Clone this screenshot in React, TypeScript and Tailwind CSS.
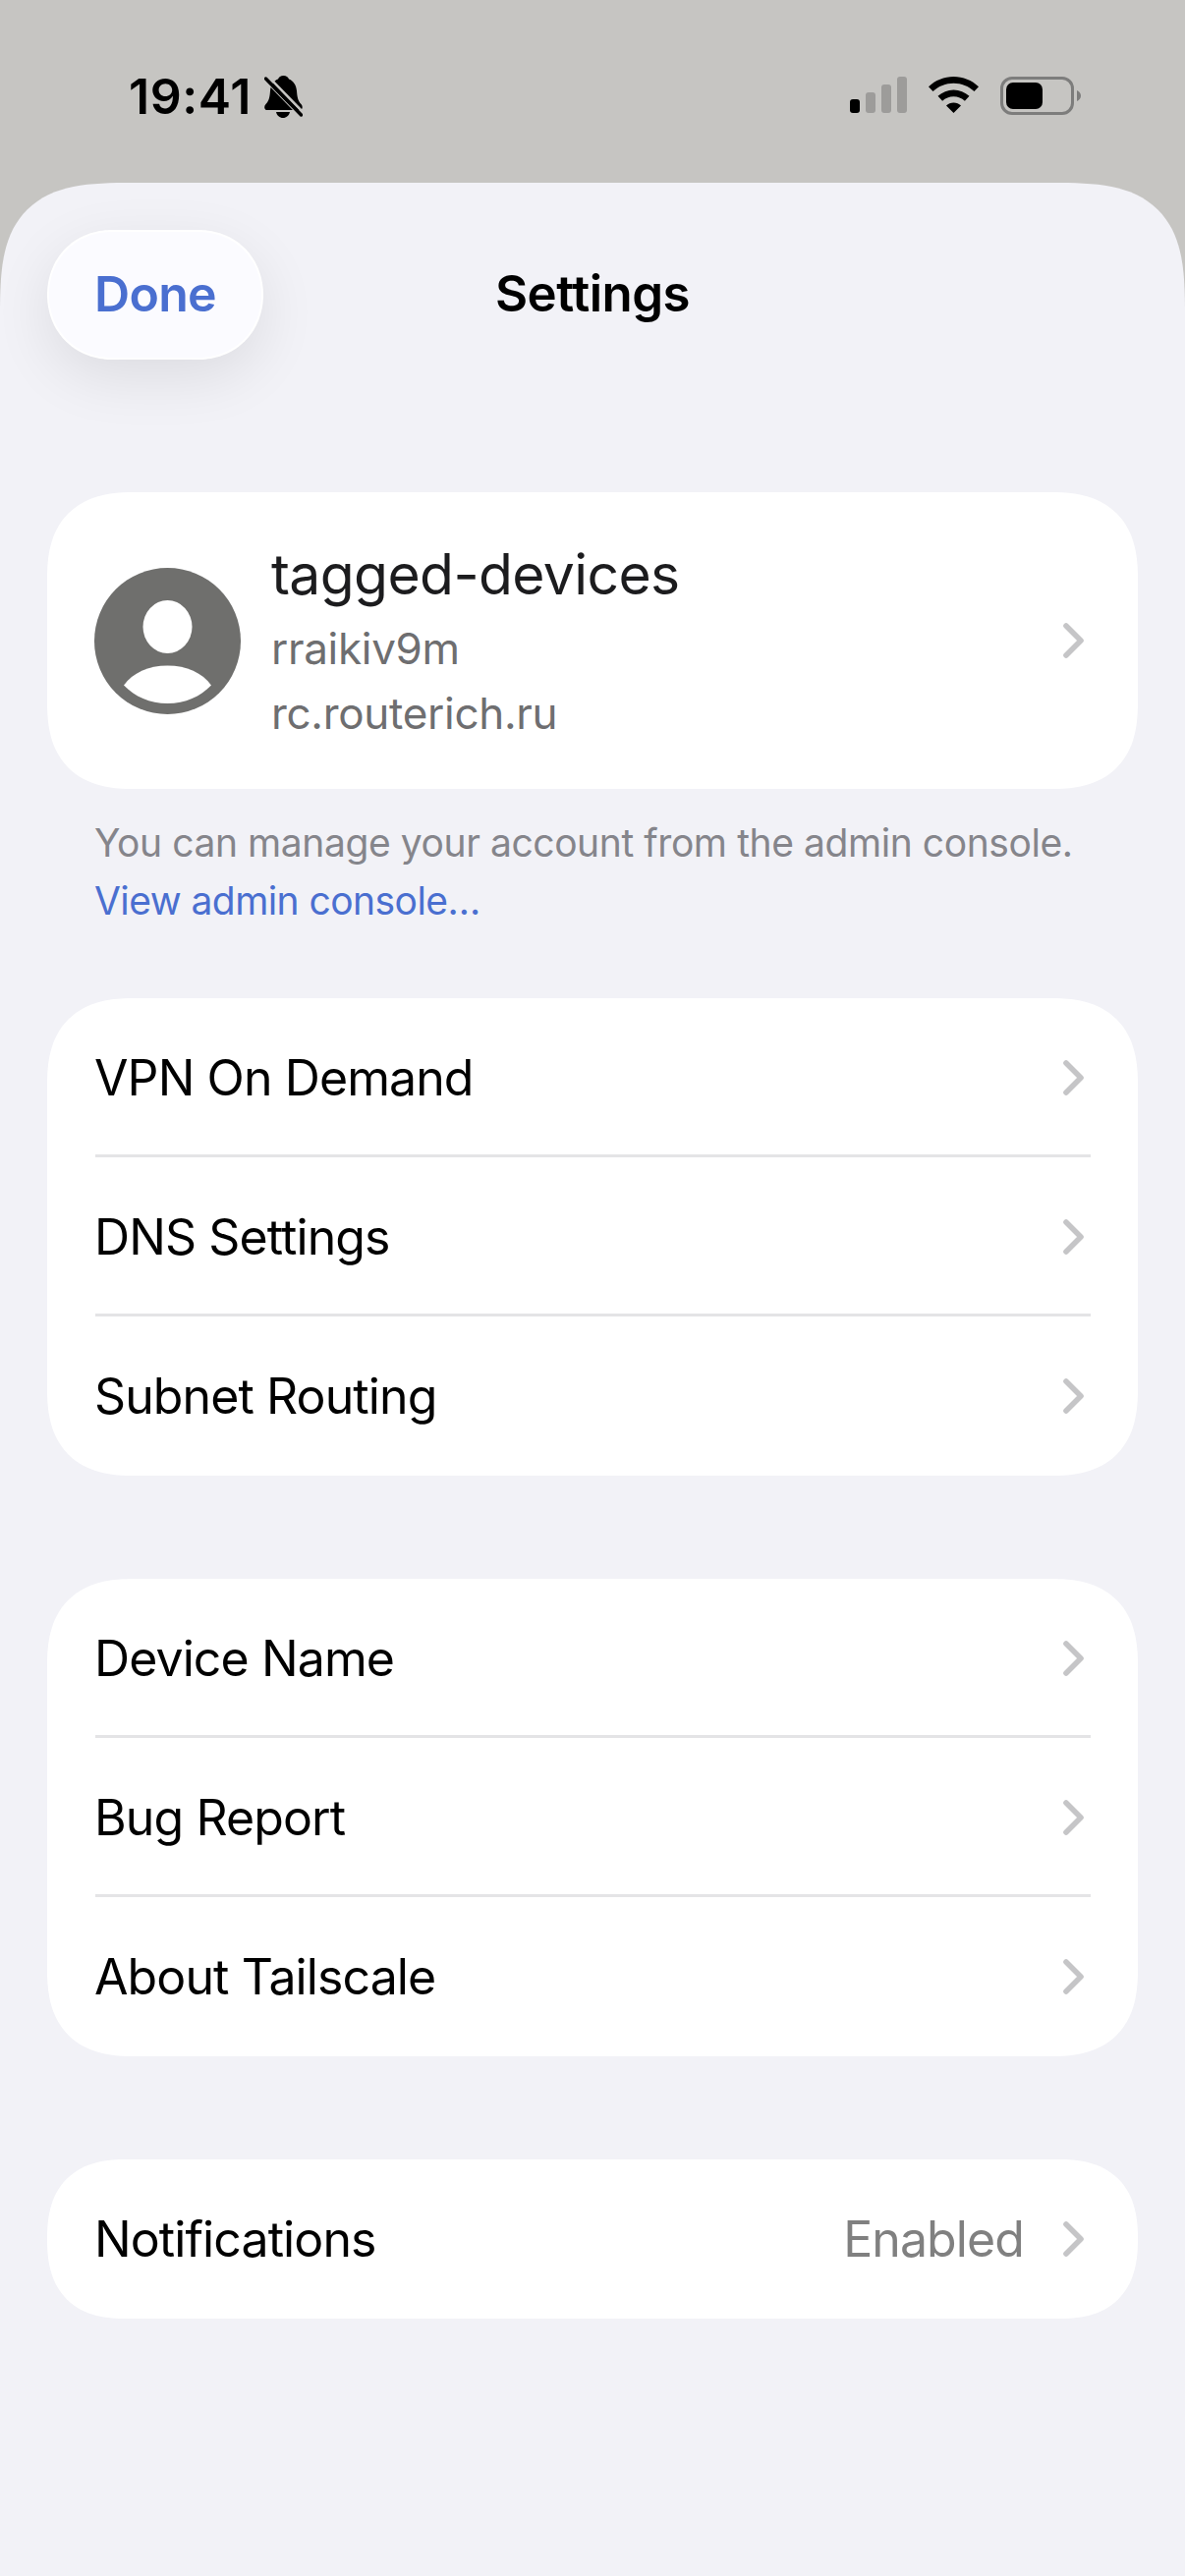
import { ReactNode } from 'react';

function Chevron() {
  return (
    <svg className="w-[21px] h-[36px] shrink-0" viewBox="0 0 21 36" fill="none">
      <path d="M3 3l15 15L3 33" stroke="#c5c5c7" strokeWidth={5.600} strokeLinecap="round" strokeLinejoin="round" />
    </svg>
  );
}

function MutedBell() {
  return (
    <svg className="w-[39px] h-[43px]" viewBox="0 0 39 43">
      <path d="M19.500 0c3 0 4.500 1.500 5.500 3.500 5 2 7.500 6.500 8 12 .5 6 1 10 4.500 13.500 2 2 1.500 6-1.500 6H3c-3 0-3.800-3.500-1.500-6 3.500-3.500 4-7.500 4.500-13.500C6.500 10 9 5.500 14 3.500 15 1.500 16.500 0 19.500 0z" fill="#000" />
      <path d="M12 37h14c-.8 3.500-3.500 6-7 6s-6.200-2.500-7-6z" fill="#000" />
      <path d="M2.800 -.3l38 39" stroke="#c6c5c2" strokeWidth={2.600} fill="none" />
      <path d="M-.5 3.700l36 37" stroke="#c6c5c2" strokeWidth={1.400} fill="none" />
      <path d="M1.500 3l36 37" stroke="#000" strokeWidth={3.400} strokeLinecap="round" fill="none" />
    </svg>
  );
}

function SignalBars() {
  return (
    <div className="flex items-end gap-[6px] h-[37px]">
      <div className="w-[10px] h-[14px] rounded-[3px] bg-black" />
      <div className="w-[10px] h-[21px] rounded-[3px] bg-[#9d9c9a]" />
      <div className="w-[10px] h-[29px] rounded-[3px] bg-[#9d9c9a]" />
      <div className="w-[10px] h-[37px] rounded-[3px] bg-[#9d9c9a]" />
    </div>
  );
}

function Wifi() {
  return (
    <svg className="w-[51px] h-[37px]" viewBox="0 0 51 37">
      <path d="M25.500 0C35 0 44 3.700 51 10.200l-4.500 4.800C40.800 9.700 33.500 6.700 25.500 6.700S10.200 9.700 4.500 15L0 10.200C7 3.700 16 0 25.500 0z" fill="#000" />
      <path d="M25.500 13.500c6 0 11.500 2.300 16 6.300l-4.600 4.900c-3.100-2.800-7.100-4.400-11.400-4.400s-8.300 1.600-11.400 4.400l-4.600-4.900c4.500-4 10-6.300 16-6.300z" fill="#000" />
      <path d="M25.500 26.500c2.900 0 5.500 1 7.500 2.900L25.500 37 18 29.400c2-1.900 4.600-2.900 7.500-2.900z" fill="#000" />
    </svg>
  );
}

function Battery() {
  return (
    <div className="flex items-center gap-[3px]">
      <div className="w-[75px] h-[39px] rounded-[12px] border-[3px] border-[#7d7d7c] p-[3px]">
        <div className="w-[37px] h-full rounded-[7px] bg-black" />
      </div>
      <svg className="w-[4px] h-[11px]" viewBox="0 0 4 11">
        <path d="M0 0c2.500 1 4 3 4 5.500S2.500 10 0 11z" fill="#7d7d7c" />
      </svg>
    </div>
  );
}

function Avatar() {
  return (
    <svg className="w-[149px] h-[149px] shrink-0" viewBox="0 0 149 149">
      <circle cx="74.500" cy="74.500" r="74.500" fill="#6f6f6d" />
      <ellipse cx="74.500" cy="60" rx="25" ry="27" fill="#fff" />
      <path d="M30 119.500C39 107 55 99.500 74.500 99.500S110 107 119 119.500C108 131 92.500 138 74.500 138S41 131 30 119.500z" fill="#fff" />
    </svg>
  );
}

function Card({ children }: { children: ReactNode }) {
  return <div className="bg-white rounded-[88px] [corner-shape:superellipse(1.3)] mx-[48px] overflow-hidden">{children}</div>;
}

function Row({ label, value, last }: { label: string; value?: string; last?: boolean }) {
  return (
    <div className="relative h-[162px] pl-[48px] pr-[55px] flex items-center">
      <span className="flex-1 text-[50px] tracking-[-0.9px] text-black">{label}</span>
      {value && <span className="text-[50px] tracking-[-0.9px] text-[#808080] mr-[40px]">{value}</span>}
      <Chevron />
      {!last && <div className="absolute left-[49px] right-[48px] bottom-0 h-[3px] bg-[#e4e4e6]" />}
    </div>
  );
}

export default function App() {
  return (
    <div className="w-[1206px] h-[2622px] bg-[#c6c5c2] flex flex-col font-['Inter',sans-serif]">
      <div className="h-[186px] shrink-0 flex justify-between pl-[131px] pr-[106px] pt-[77px]">
        <div className="flex items-start gap-[13px]">
          <span className="text-[50px] leading-[42px] font-semibold tracking-[0.6px] text-black">19:41</span>
          <MutedBell />
        </div>
        <div className="flex items-start gap-[22px] pt-[1px]">
          <SignalBars />
          <Wifi />
          <Battery />
        </div>
      </div>

      <div className="flex-1 bg-[#f2f2f7] rounded-t-[135px] [corner-shape:superellipse(1.6)] overflow-hidden">
        <div className="grid grid-cols-[1fr_auto_1fr] items-center pl-[48px] pt-[48px] pr-[48px]">
          <div className="w-[220px] h-[132px] rounded-[66px] [corner-shape:superellipse(1.05)] bg-[#fbfbff] border-[2px] border-white shadow-[0_18px_60px_rgba(0,0,0,0.09)] flex items-center justify-center">
            <span className="text-[50px] font-semibold tracking-[-0.7px] text-[#4a6fd0] -mt-[2px]">Done</span>
          </div>
          <span className="text-[51px] font-semibold tracking-[-0.5px] text-black -mt-[2px]">Settings</span>
          <div />
        </div>

        <div className="mt-[135px]">
          <Card>
            <div className="h-[302px] pl-[48px] pr-[55px] flex items-center">
              <Avatar />
              <div className="flex-1 ml-[31px] pt-[5px]">
                <div className="text-[57px] leading-[70px] tracking-[-0.6px] text-[#1c1c1e] mb-[7px]">tagged-devices</div>
                <div className="text-[44px] leading-[66px] tracking-[-0.3px] text-[#6e6e70]">rraikiv9m</div>
                <div className="text-[44px] leading-[66px] tracking-[-0.3px] text-[#6e6e70]">rc.routerich.ru</div>
              </div>
              <Chevron />
            </div>
          </Card>
        </div>

        <div className="mx-[96px] mt-[25px] text-[39px] leading-[60px]">
          <div className="tracking-[-0.42px] text-[#85858b]">You can manage your account from the admin console.</div>
          <div className="tracking-[-0.56px] text-[#4a6fd0] -mt-[1px] mb-[1px]">View admin console…</div>
        </div>

        <div className="mt-[69px]">
          <Card>
            <Row label="VPN On Demand" />
            <Row label="DNS Settings" />
            <Row label="Subnet Routing" last />
          </Card>
        </div>

        <div className="mt-[105px]">
          <Card>
            <Row label="Device Name" />
            <Row label="Bug Report" />
            <Row label="About Tailscale" last />
          </Card>
        </div>

        <div className="mt-[105px]">
          <Card>
            <Row label="Notifications" value="Enabled" last />
          </Card>
        </div>
      </div>
    </div>
  );
}
